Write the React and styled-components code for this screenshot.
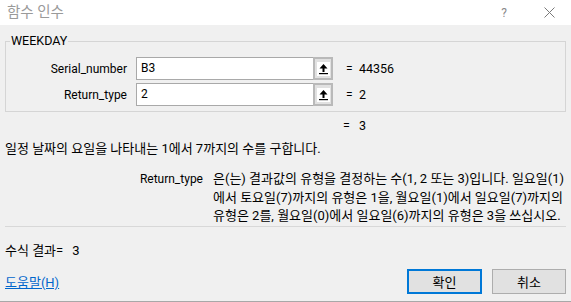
import React from "react";
import styled, { createGlobalStyle } from "styled-components";

const Global = createGlobalStyle`
  html, body { margin: 0; padding: 0; background: #f0f0f0; }
  body { font-family: Roboto, "Noto Sans CJK KR", sans-serif; font-size: 13px; color: #000; }
`;

const Window = styled.div`
  width: 571px;
  height: 302px;
  box-sizing: border-box;
  background: #f0f0f0;
  border-bottom: 1px solid #a8a8a8;
  display: flex;
  flex-direction: column;
  overflow: hidden;
`;

const TitleBar = styled.div`
  height: 25px;
  background: #fff;
  display: flex;
  align-items: center;
  justify-content: space-between;
  padding: 0 16px 0 7px;
  flex-shrink: 0;
`;

const Title = styled.div`
  font-size: 14.5px;
  color: #9a9a9a;
  line-height: 16px;
`;

const TitleButtons = styled.div`
  display: flex;
  align-items: center;
  gap: 37px;
`;

const TitleGlyph = styled.span`
  color: #8a8a8a;
  font-size: 12px;
  line-height: 12px;
  display: flex;
  align-items: center;
`;

const Body = styled.div`
  padding: 0 5px;
  display: flex;
  flex-direction: column;
`;

const Group = styled.fieldset`
  margin: 9px 0 0 0;
  padding: 9px 0 5px 0;
  border: 1px solid #d5d5d5;
  min-width: 0;
  font-size: 12px;
`;

const Legend = styled.legend`
  padding: 0 1px;
  margin-left: 4px;
  line-height: 14px;
  font-size: 12.5px;
`;

const ArgGrid = styled.div`
  display: grid;
  grid-template-columns: 121px 197px 13px auto;
  grid-auto-rows: 23px;
  column-gap: 9px;
  row-gap: 3px;
  align-items: center;
`;

const ArgLabel = styled.div`
  text-align: right;
`;

const InputBox = styled.div`
  display: flex;
  height: 23px;
  box-sizing: border-box;
  border: 1px solid #a9a9a9;
  background: #fff;
`;

const Field = styled.div`
  flex: 1;
  padding-left: 4px;
  line-height: 21px;
`;

const RefButton = styled.div`
  width: 20px;
  margin: -1px -1px -1px 0;
  box-sizing: border-box;
  border: 2px solid #b9b9b9;
  background: #e1e1e1;
  display: flex;
  align-items: center;
  justify-content: center;
`;

const RefIcon = styled.div`
  width: 13px;
  height: 14px;
  background: #fff;
  display: flex;
  align-items: center;
  justify-content: center;
`;

const Equals = styled.div`
  padding-left: 4px;
`;

const Value = styled.div`
  margin-left: -5px;
  font-size: 12.5px;
`;

const ResultLine = styled.div`
  margin-top: 7px;
  padding-left: 338px;
  line-height: 14px;
  font-size: 12.5px;
  display: flex;
  gap: 9px;
`;

const Description = styled.div`
  margin-top: 8px;
  line-height: 16px;
`;

const ArgHelp = styled.div`
  margin-top: 13px;
  display: grid;
  grid-template-columns: 198px auto;
  column-gap: 10px;
  line-height: 18.5px;
`;

const ArgName = styled.div`
  text-align: right;
  font-size: 12px;
`;

const ArgText = styled.div`
  white-space: nowrap;
`;

const Divider = styled.div`
  height: 1px;
  background: #d8d8d8;
`;

const FormulaResult = styled.div`
  margin-top: 16px;
  line-height: 16px;
`;

const ResultValue = styled.span`
  margin-left: 9px;
`;

const Footer = styled.div`
  margin-top: 10px;
  display: flex;
  align-items: center;
  justify-content: space-between;
`;

const HelpLink = styled.a`
  color: #0066cc;
  text-decoration: underline;
  cursor: pointer;
`;

const Buttons = styled.div`
  display: flex;
  gap: 10px;
`;

const Button = styled.button`
  width: ${(p) => (p.$primary ? 75 : 74)}px;
  height: 25px;
  box-sizing: border-box;
  background: #e1e1e1;
  border: ${(p) => (p.$primary ? "2px solid #0078d7" : "1px solid #adadad")};
  font-family: Roboto, "Noto Sans CJK KR", sans-serif;
  font-size: 13px;
  color: #000;
  padding: 0;
`;

const ArrowIcon = () => (
  <svg width="11" height="12" viewBox="0 0 11 12">
    <path d="M5.5 1 L1.5 5.5 H4.5 V9 H6.5 V5.5 H9.5 Z" fill="#000" />
    <rect x="1" y="10" width="9" height="1.2" fill="#000" />
  </svg>
);

const CloseIcon = () => (
  <svg width="11" height="11" viewBox="0 0 11 11">
    <path d="M0.5 0.5 L10.5 10.5 M10.5 0.5 L0.5 10.5" stroke="#7a7a7a" strokeWidth="1" />
  </svg>
);

const args = [
  { name: "Serial_number", value: "B3", result: "44356" },
  { name: "Return_type", value: "2", result: "2" },
];

export default function App() {
  return (
    <>
      <Global />
      <Window>
        <TitleBar>
          <Title>함수 인수</Title>
          <TitleButtons>
            <TitleGlyph>?</TitleGlyph>
            <TitleGlyph>
              <CloseIcon />
            </TitleGlyph>
          </TitleButtons>
        </TitleBar>
        <Body>
          <Group>
            <Legend>WEEKDAY</Legend>
            <ArgGrid>
              {args.map((a) => (
                <React.Fragment key={a.name}>
                  <ArgLabel>{a.name}</ArgLabel>
                  <InputBox>
                    <Field>{a.value}</Field>
                    <RefButton>
                      <RefIcon>
                        <ArrowIcon />
                      </RefIcon>
                    </RefButton>
                  </InputBox>
                  <Equals>=</Equals>
                  <Value>{a.result}</Value>
                </React.Fragment>
              ))}
            </ArgGrid>
          </Group>
          <ResultLine>
            <span>=</span>
            <span>3</span>
          </ResultLine>
          <Description>일정 날짜의 요일을 나타내는 1에서 7까지의 수를 구합니다.</Description>
          <ArgHelp>
            <ArgName>Return_type</ArgName>
            <ArgText>
              은(는) 결과값의 유형을 결정하는 수(1, 2 또는 3)입니다. 일요일(1)
              <br />
              에서 토요일(7)까지의 유형은 1을, 월요일(1)에서 일요일(7)까지의
              <br />
              유형은 2를, 월요일(0)에서 일요일(6)까지의 유형은 3을 쓰십시오.
            </ArgText>
          </ArgHelp>
          <Divider />
          <FormulaResult>
            수식 결과=<ResultValue>3</ResultValue>
          </FormulaResult>
          <Footer>
            <HelpLink>도움말(H)</HelpLink>
            <Buttons>
              <Button $primary>확인</Button>
              <Button>취소</Button>
            </Buttons>
          </Footer>
        </Body>
      </Window>
    </>
  );
}
